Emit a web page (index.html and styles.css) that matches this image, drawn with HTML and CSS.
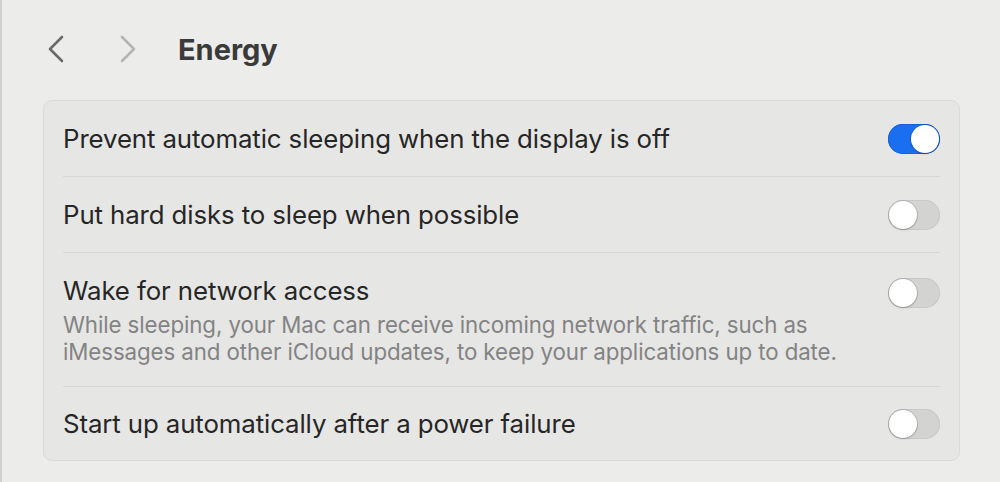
FILE: index.html
```html
<!DOCTYPE html>
<html>
<head>
<meta charset="utf-8">
<link rel="stylesheet" href="styles.css">
</head>
<body>
<div class="window">
  <header class="toolbar">
    <svg class="nav back" width="20" height="30" viewBox="0 0 20 30"><path d="M16 3 L4 15 L16 27" fill="none" stroke="#6a6a6a" stroke-width="2.6" stroke-linecap="round" stroke-linejoin="round"/></svg>
    <svg class="nav fwd" width="20" height="30" viewBox="0 0 20 30"><path d="M4 3 L16 15 L4 27" fill="none" stroke="#b4b4b4" stroke-width="2.6" stroke-linecap="round" stroke-linejoin="round"/></svg>
    <h1 class="title">Energy</h1>
  </header>
  <section class="card">
    <div class="row">
      <div class="label">Prevent automatic sleeping when the display is off</div>
      <div class="toggle on"><span class="knob"></span></div>
    </div>
    <div class="row">
      <div class="label">Put hard disks to sleep when possible</div>
      <div class="toggle"><span class="knob"></span></div>
    </div>
    <div class="row tall">
      <div class="text">
        <div class="label">Wake for network access</div>
        <div class="desc">While sleeping, your Mac can receive incoming network traffic, such as<br>iMessages and other iCloud updates, to keep your applications up to date.</div>
      </div>
      <div class="toggle"><span class="knob"></span></div>
    </div>
    <div class="row">
      <div class="label">Start up automatically after a power failure</div>
      <div class="toggle"><span class="knob"></span></div>
    </div>
  </section>
</div>
</body>
</html>
```
FILE: styles.css
```css
html, body {
  margin: 0;
  padding: 0;
  background: #ececeb;
  width: 1000px;
  height: 482px;
  overflow: hidden;
  font-family: Inter, "Helvetica Neue", Arial, sans-serif;
}
.window {
  height: 482px;
  box-sizing: border-box;
  border-left: 2px solid #d2d2d1;
  padding-left: 41px;
  padding-right: 40px;
  position: relative;
}
.toolbar {
  display: flex;
  align-items: center;
  height: 100px;
  padding-bottom: 2px;
  box-sizing: border-box;
}
.nav {
  display: block;
}
.back { margin-left: 3px; }
.fwd { margin-left: 52px; }
.title {
  margin: 0 0 0 40px;
  font-size: 29px;
  font-weight: 700;
  color: #3a3a3a;
  letter-spacing: 0;
}
.card {
  background: #e6e6e5;
  border: 1px solid #dadad9;
  border-radius: 9px;
  padding: 0 19px;
  box-sizing: border-box;
  width: 917px;
}
.row {
  display: flex;
  align-items: center;
  justify-content: space-between;
  height: 75px;
  border-bottom: 1px solid #d6d6d5;
}
.row:last-child { border-bottom: none; height: 73px; }
.row.tall {
  height: 134px;
  align-items: flex-start;
  padding-top: 22px;
  box-sizing: border-box;
}
.row.tall .toggle { margin-top: 3px; }
.label {
  font-size: 25.8px;
  color: #262626;
  letter-spacing: -0.1px;
  line-height: 32px;
}
.desc {
  font-size: 22.3px;
  line-height: 27px;
  color: #838383;
  margin-top: 4px;
  letter-spacing: -0.1px;
}
.toggle {
  width: 52px;
  height: 30px;
  border-radius: 15px;
  background: #d3d3d2;
  position: relative;
  box-shadow: inset 0 0 0 1px #c8c8c7;
  flex-shrink: 0;
}
.toggle.on {
  background: #1a6ff0;
  box-shadow: inset 0 0 0 1px #1762d6;
}
.knob {
  position: absolute;
  top: 1px;
  left: 1px;
  width: 28px;
  height: 28px;
  border-radius: 50%;
  background: #ffffff;
  box-shadow: 0 0 0 1px rgba(0,0,0,0.12), 0 1px 2px rgba(0,0,0,0.2);
}
.toggle.on .knob { left: 23px; }
```
